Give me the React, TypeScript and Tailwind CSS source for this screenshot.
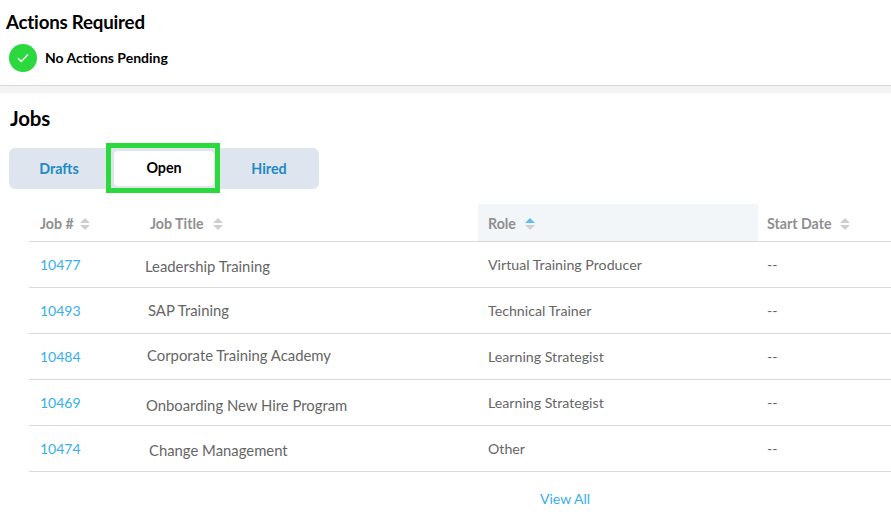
import React from 'react';

const rows = [
  { id: '10477', title: 'Leadership Training', titleClass: 'pl-[5px] pt-[4px]', role: 'Virtual Training Producer' },
  { id: '10493', title: 'SAP Training', titleClass: 'pl-[8px]', role: 'Technical Trainer' },
  { id: '10484', title: 'Corporate Training Academy', titleClass: 'pl-[7px] pb-[2px]', role: 'Learning Strategist' },
  { id: '10469', title: 'Onboarding New Hire Program', titleClass: 'pl-[6px] pt-[5px]', role: 'Learning Strategist' },
  { id: '10474', title: 'Change Management', titleClass: 'pl-[9px] pt-[4px]', role: 'Other' },
];

function SortIcon({ active = false, className = 'ml-[9px]' }: { active?: boolean; className?: string }) {
  return (
    <svg width="10" height="14" viewBox="0 0 10 14" className={`shrink-0 ${className}`}>
      <path d="M5 1 L10 6 L0 6 Z" fill={active ? '#5bc0ee' : '#cfcfcf'} />
      <path d="M0 8 L10 8 L5 13 Z" fill="#cfcfcf" />
    </svg>
  );
}

export default function App() {
  return (
    <div className="w-[891px] h-[515px] overflow-hidden bg-white font-['Lato','Liberation_Sans',sans-serif]">
      {/* Actions Required */}
      <section className="h-[86px] border-b border-[#d9d9d9] pl-[6px] pt-[10px]">
        <h2 className="text-[18.7px] leading-[24px] font-bold text-black tracking-[-0.2px]">Actions Required</h2>
        <div className="flex items-center pl-[3px] mt-[10px]">
          <div className="w-[28px] h-[28px] rounded-full bg-[#2bd93f] flex items-center justify-center">
            <svg width="12" height="10" viewBox="0 0 12 10" fill="none">
              <path d="M1 5.2 L4.3 8.5 L11 1.5" stroke="#fff" strokeWidth="1.3" />
            </svg>
          </div>
          <span className="ml-[8px] pb-[2px] text-[14px] font-bold text-black">No Actions Pending</span>
        </div>
      </section>
      <div className="h-[7px] bg-[#f3f3f3]" />

      {/* Jobs */}
      <section className="pt-[12px]">
        <h2 className="pl-[10px] text-[20.5px] leading-[26px] font-bold text-black tracking-[-0.2px]">Jobs</h2>
        <div className="relative ml-[9px] mt-[17px] w-[310px] h-[41px] rounded-[6px] bg-[#dfe5ee] flex items-center text-[14.3px] font-bold">
          <button className="w-[97px] h-full pl-[3px] text-[#1d8bc4]">Drafts</button>
          <button className="ml-[8px] w-[100px] h-[35px] pb-[2px] rounded-[4px] bg-white text-black">Open</button>
          <button className="w-[105px] h-full pl-[5px] text-[#1d8bc4]">Hired</button>
          <div className="absolute left-[97px] top-[-5px] w-[114px] h-[50px] border-[5px] border-[#2bd93f]" />
        </div>

        <div className="ml-[29px] mt-[15px] text-[14.2px]">
          <div className="h-[38px] border-b border-[#d9d9d9] grid grid-cols-[111px_338px_280px_133px] font-bold text-[#8f8f8f]">
            <div className="flex items-center pl-[11px] pt-[2px]">Job #<SortIcon className="ml-[6px]" /></div>
            <div className="flex items-center pl-[10px] pt-[2px]">Job Title<SortIcon /></div>
            <div className="flex items-center pl-[10px] pt-[2px] bg-[#f3f6f9]">Role<SortIcon active /></div>
            <div className="flex items-center pl-[9px] pt-[2px]">Start Date<SortIcon /></div>
          </div>
          {rows.map((r) => (
            <div key={r.id} className="h-[46px] border-b border-[#d9d9d9] grid grid-cols-[111px_338px_280px_133px] items-center text-[#666666]">
              <div className="pl-[11px] text-[14px] text-[#35b0ec]">{r.id}</div>
              <div className={`text-[14.85px] ${r.titleClass}`}>{r.title}</div>
              <div className="pl-[10px]">{r.role}</div>
              <div className="pl-[9px]">--</div>
            </div>
          ))}
        </div>
        <div className="ml-[29px] mt-[16px] w-[862px] pl-[210px] text-center text-[14px] text-[#35b0ec]">View All</div>
      </section>
    </div>
  );
}
